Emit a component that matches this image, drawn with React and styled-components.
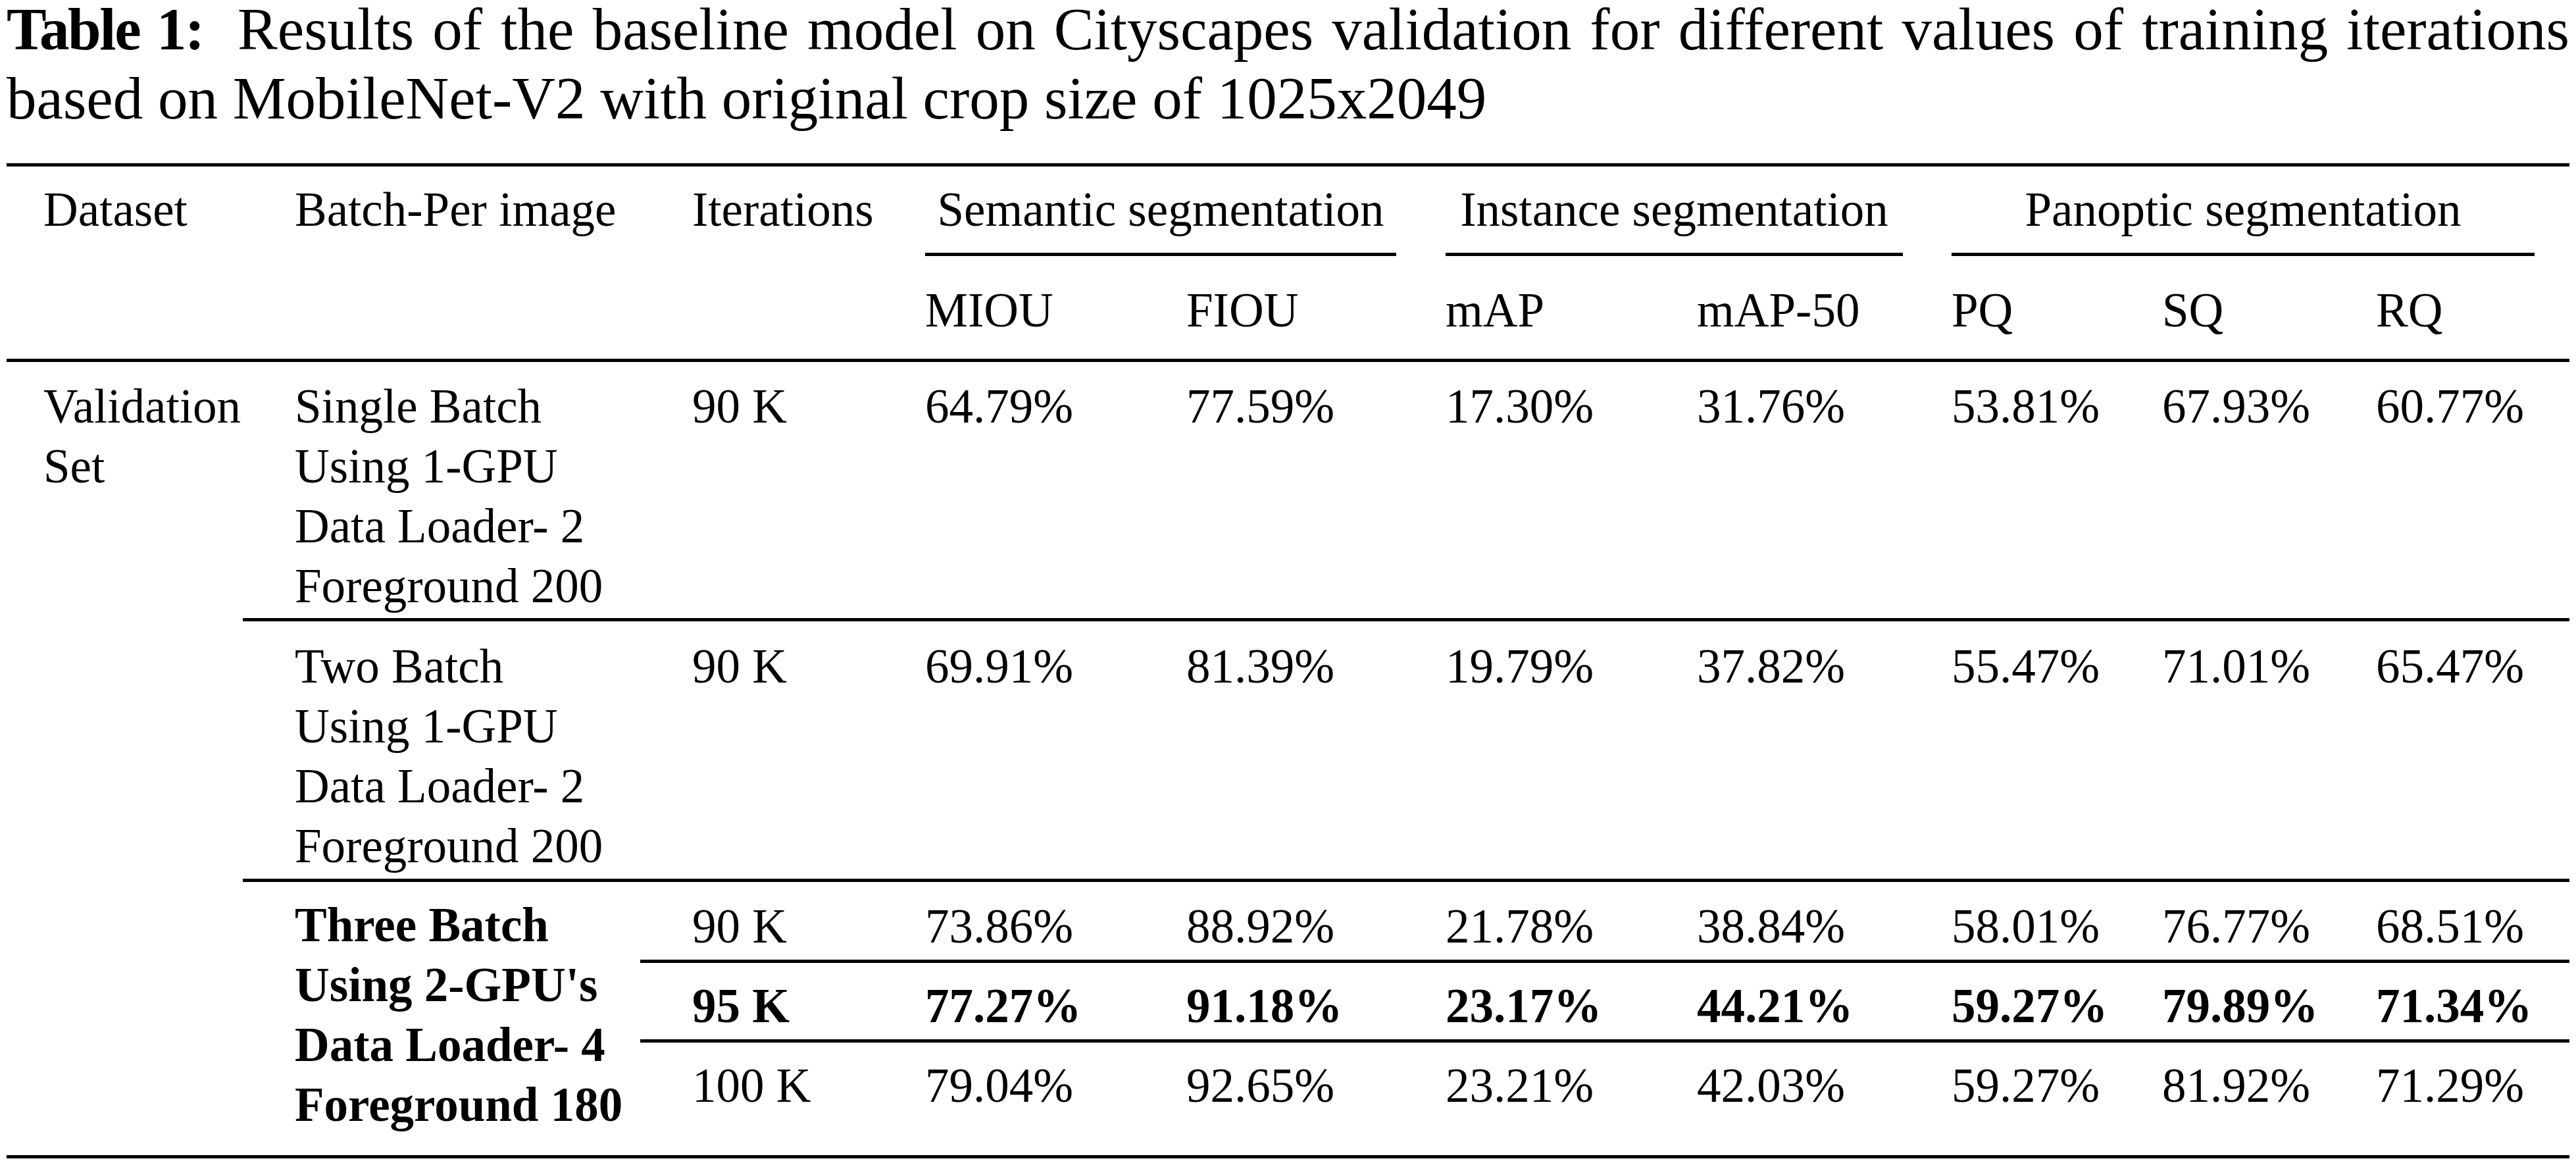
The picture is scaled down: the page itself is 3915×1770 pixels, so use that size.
import React from 'react'
import styled, { createGlobalStyle } from 'styled-components'

const GlobalStyle = createGlobalStyle`
  html, body {
    margin: 0;
    padding: 0;
    background: #fff;
  }
  body {
    font-family: "Liberation Serif", "Times New Roman", serif;
    color: #000;
  }
`

// left padding of the text in each of the 10 columns
const PAD = [56, 79, 79, 0, 0, 0, 0, 0, 0, 0]

const Page = styled.div`
  width: 3895px;
  padding: 0 10px;
`

const Caption = styled.p`
  margin: -8px 0 0;
  font-size: 91px;
  line-height: 105px;
  text-align: justify;
  text-align-last: left;
`

const Label = styled.b`
  font-weight: 700;
  letter-spacing: -2.4px;
  margin-right: 24px;
`

const Grid = styled.div`
  display: grid;
  grid-template-columns: 359px 604px 433px 397px 394px 382px 387px 320px 325px 294px;
  grid-template-rows: 5px auto 5px auto 5px auto 5px auto 5px auto 5px auto 5px auto 5px;
  margin-top: 46px;
  font-size: 73px;
  line-height: 91px;
`

const Rule = styled.div`
  grid-row: ${p => p.$row};
  grid-column: ${p => p.$from} / ${p => p.$to || -1};
  margin-right: ${p => p.$trim || 0}px;
  background: #000;
`

const Cell = styled.div`
  grid-row: ${p => p.$row};
  grid-column: ${p => p.$col};
  align-self: start;
  padding: ${p => p.$pt}px 0 ${p => p.$pb || 0}px ${p => PAD[p.$col - 1]}px;
  font-weight: ${p => (p.$bold ? 700 : 400)};
  white-space: nowrap;
`

const GroupHead = styled.div`
  grid-row: 2;
  grid-column: ${p => p.$cols};
  margin-right: ${p => p.$trim}px;
  padding: 20px 0;
  text-align: center;
  white-space: nowrap;
`

const Stack = styled(Cell)`
  display: flex;
  flex-direction: column;
`

const rows = [
  {
    row: 6,
    pt: 21.5,
    pb: 3.5,
    batch: ['Single Batch', 'Using 1-GPU', 'Data Loader- 2', 'Foreground 200'],
    iter: '90 K',
    vals: ['64.79%', '77.59%', '17.30%', '31.76%', '53.81%', '67.93%', '60.77%'],
  },
  {
    row: 8,
    pt: 22.5,
    pb: 4.5,
    batch: ['Two Batch', 'Using 1-GPU', 'Data Loader- 2', 'Foreground 200'],
    iter: '90 K',
    vals: ['69.91%', '81.39%', '19.79%', '37.82%', '55.47%', '71.01%', '65.47%'],
  },
]

const subRows = [
  { row: 10, pt: 21.5, pb: 5, iter: '90 K', vals: ['73.86%', '88.92%', '21.78%', '38.84%', '58.01%', '76.77%', '68.51%'] },
  { row: 12, pt: 20.5, pb: 4.5, bold: true, iter: '95 K', vals: ['77.27%', '91.18%', '23.17%', '44.21%', '59.27%', '79.89%', '71.34%'] },
  { row: 14, pt: 20.5, pb: 60, iter: '100 K', vals: ['79.04%', '92.65%', '23.21%', '42.03%', '59.27%', '81.92%', '71.29%'] },
]

const subHeads = ['MIOU', 'FIOU', 'mAP', 'mAP-50', 'PQ', 'SQ', 'RQ']

export default function App() {
  return (
    <Page>
      <GlobalStyle />
      <Caption>
        <Label>Table 1:</Label> Results of the baseline model on Cityscapes validation for different values
        of training iterations based on MobileNet-V2 with original crop size of 1025x2049
      </Caption>
      <Grid>
        <Rule $row={1} $from={1} />

        <Cell $row="2 / 5" $col={1} $pt={20}>Dataset</Cell>
        <Cell $row="2 / 5" $col={2} $pt={20}>Batch-Per image</Cell>
        <Cell $row="2 / 5" $col={3} $pt={20}>Iterations</Cell>
        <GroupHead $cols="4 / 6" $trim={75}>Semantic segmentation</GroupHead>
        <GroupHead $cols="6 / 8" $trim={74}>Instance segmentation</GroupHead>
        <GroupHead $cols="8 / 11" $trim={53}>Panoptic segmentation</GroupHead>

        <Rule $row={3} $from={4} $to={6} $trim={75} />
        <Rule $row={3} $from={6} $to={8} $trim={74} />
        <Rule $row={3} $from={8} $to={11} $trim={53} />

        {subHeads.map((h, i) => (
          <Cell key={h} $row={4} $col={i + 4} $pt={36.5} $pb={28.5}>{h}</Cell>
        ))}

        <Rule $row={5} $from={1} />

        <Stack $row="6 / 15" $col={1} $pt={21.5}>
          <span>Validation</span>
          <span>Set</span>
        </Stack>

        {rows.map(r => (
          <React.Fragment key={r.row}>
            <Stack $row={r.row} $col={2} $pt={r.pt} $pb={r.pb}>
              {r.batch.map(line => <span key={line}>{line}</span>)}
            </Stack>
            <Cell $row={r.row} $col={3} $pt={r.pt}>{r.iter}</Cell>
            {r.vals.map((v, i) => (
              <Cell key={i} $row={r.row} $col={i + 4} $pt={r.pt}>{v}</Cell>
            ))}
            <Rule $row={r.row + 1} $from={2} />
          </React.Fragment>
        ))}

        <Stack $row="10 / 15" $col={2} $pt={19.5} $pb={31.5} $bold>
          <span>Three Batch</span>
          <span>Using 2-GPU's</span>
          <span>Data Loader- 4</span>
          <span>Foreground 180</span>
        </Stack>

        {subRows.map((r, idx) => (
          <React.Fragment key={r.row}>
            <Cell $row={r.row} $col={3} $pt={r.pt} $pb={r.pb} $bold={r.bold}>{r.iter}</Cell>
            {r.vals.map((v, i) => (
              <Cell key={i} $row={r.row} $col={i + 4} $pt={r.pt} $pb={r.pb} $bold={r.bold}>{v}</Cell>
            ))}
            {idx < subRows.length - 1 && <Rule $row={r.row + 1} $from={3} />}
          </React.Fragment>
        ))}

        <Rule $row={15} $from={1} />
      </Grid>
    </Page>
  )
}
